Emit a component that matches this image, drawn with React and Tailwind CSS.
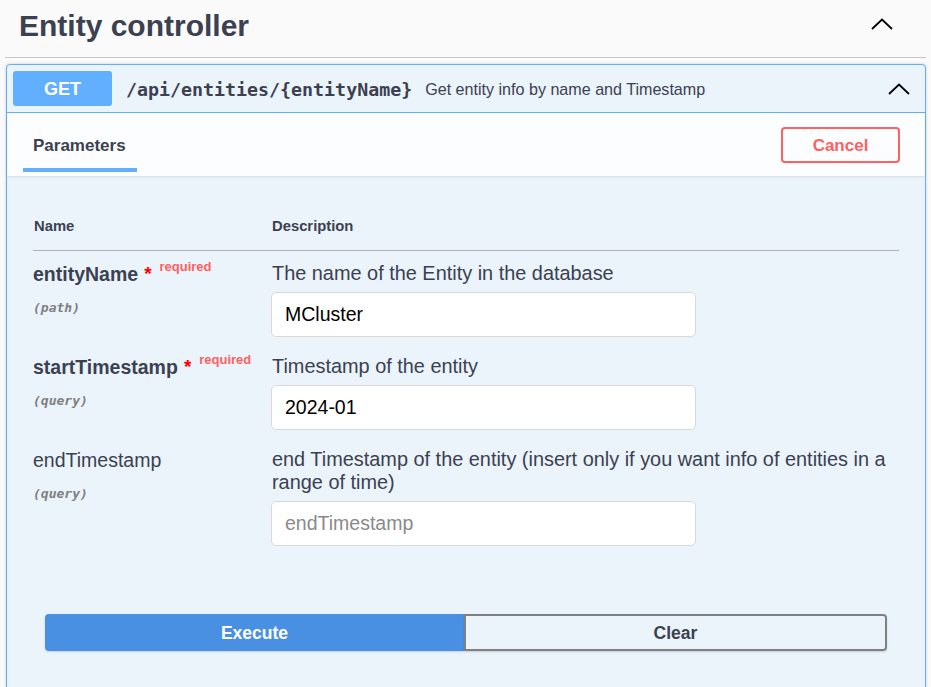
import React, { useState } from "react";

const sans = { fontFamily: '"Liberation Sans", Arial, sans-serif' };

function ChevronUp({ className }) {
  return (
    <svg viewBox="0 0 22 12" className={className} fill="none" stroke="#000" strokeWidth="1.8">
      <path d="M1 11 L11 1.5 L21 11" />
    </svg>
  );
}

function ParamRow({ name, required, where, description, value, placeholder, onChange }) {
  return (
    <div className="flex pb-[16px]">
      <div className="w-[239px] shrink-0 pt-[2px]">
        <div className="flex items-start">
          <span className={`text-[19.5px] leading-[24px] text-[#3b4151] ${required ? "font-bold" : ""}`}>{name}</span>
          {required && (
            <>
              <span className="ml-[6px] text-[19px] leading-[24px] font-bold text-[#ff0000]">*</span>
              <span className="ml-[8px] -mt-[3px] text-[13px] leading-[16px] font-bold text-[#ff6060]" style={{ fontWeight: 600 }}>required</span>
            </>
          )}
        </div>
        <div
          className="mt-[12px] text-[13px] italic font-semibold text-[#808080]"
          style={{ fontFamily: '"DejaVu Sans Mono", "Liberation Mono", monospace' }}
        >
          ({where})
        </div>
      </div>
      <div className="flex-1 pt-[2px]">
        <div className="text-[19.9px] leading-[23px] text-[#3b4151]">{description}</div>
        <input
          value={value}
          placeholder={placeholder}
          onChange={onChange}
          className="mt-[7px] -ml-[1px] w-[425px] h-[45px] rounded-[5px] border border-[#d9d9d9] bg-white px-[13px] text-[19.5px] text-black placeholder:text-[#8a8a8a] outline-none"
          style={sans}
        />
      </div>
    </div>
  );
}

export default function App() {
  const [entityName, setEntityName] = useState("MCluster");
  const [startTs, setStartTs] = useState("2024-01");
  const [endTs, setEndTs] = useState("");

  return (
    <div className="min-h-[687px] w-[931px] bg-[#fafafa] px-[5px] overflow-hidden" style={sans}>
      <div className="flex h-[58px] items-center justify-between border-b border-[#c4c6cb] pl-[14px] pr-[33px]">
        <h3 className="text-[30px] font-bold text-[#3b4151] -mt-[6px]">Entity controller</h3>
        <ChevronUp className="w-[22px] h-[12px] -mt-[10px]" />
      </div>

      <div className="mt-[6px] ml-[1px] rounded-[4px] border border-[#61affe] bg-[#ebf3fb] shadow-[0_0_3px_rgba(0,0,0,0.19)]">
        <div className="flex h-[48px] items-center border-b border-[#61affe] px-[6px]">
          <span className="flex h-[35px] w-[99px] items-center justify-center rounded-[3px] bg-[#61affe] pt-[2px] text-[18px] font-bold text-white">
            GET
          </span>
          <span
            className="ml-[14px] pt-[2px] text-[18.3px] font-bold text-[#3b4151]"
            style={{ fontFamily: '"DejaVu Sans Mono", "Liberation Mono", monospace' }}
          >
            /api/entities/{"{entityName}"}
          </span>
          <span className="ml-[13px] pt-[2px] text-[16.1px] text-[#3b4151]">Get entity info by name and Timestamp</span>
          <ChevronUp className="ml-auto mr-[9px] w-[22px] h-[12px]" />
        </div>

        <div className="flex h-[63px] items-center justify-between bg-[#fcfdfe] pl-[16px] pr-[25px] shadow-[0_1px_2px_rgba(0,0,0,0.1)]">
          <div className="flex h-full flex-col justify-end">
            <div className="px-[10px] pb-[10px] text-[17px] font-bold text-[#3b4151]">Parameters</div>
            <div className="mb-[4px] h-[4px] w-[114px] bg-[#61affe]" />
          </div>
          <button className="h-[36px] w-[119px] rounded-[4px] border-2 border-[#ff6060] bg-transparent pt-[2px] text-[17px] font-bold text-[#ff6060]">
            Cancel
          </button>
        </div>

        <div className="px-[26px] pt-[39px]">
          <div className="flex border-b border-[#aeb0b6] pb-[13px] text-[14.8px] font-bold text-[#3b4151]">
            <div className="w-[239px] pl-[1px]">Name</div>
            <div>Description</div>
          </div>

          <div className="pt-[9px]">
            <ParamRow
              name="entityName"
              required
              where="path"
              description="The name of the Entity in the database"
              value={entityName}
              onChange={(e) => setEntityName(e.target.value)}
            />
            <ParamRow
              name="startTimestamp"
              required
              where="query"
              description="Timestamp of the entity"
              value={startTs}
              onChange={(e) => setStartTs(e.target.value)}
            />
            <ParamRow
              name="endTimestamp"
              where="query"
              description="end Timestamp of the entity (insert only if you want info of entities in a range of time)"
              value={endTs}
              placeholder="endTimestamp"
              onChange={(e) => setEndTs(e.target.value)}
            />
          </div>
        </div>

        <div className="flex px-[38px] pt-[52px] pb-[60px]">
          <button className="h-[37px] flex-1 rounded-l-[4px] bg-[#4990e2] text-[17.5px] font-bold text-white shadow-[0_1px_2px_rgba(0,0,0,0.15)]">
            Execute
          </button>
          <button className="h-[37px] flex-1 rounded-r-[4px] border-2 border-[#808080] bg-transparent text-[17.5px] font-bold text-[#3b4151] shadow-[0_1px_2px_rgba(0,0,0,0.15)]">
            Clear
          </button>
        </div>
      </div>
    </div>
  );
}
